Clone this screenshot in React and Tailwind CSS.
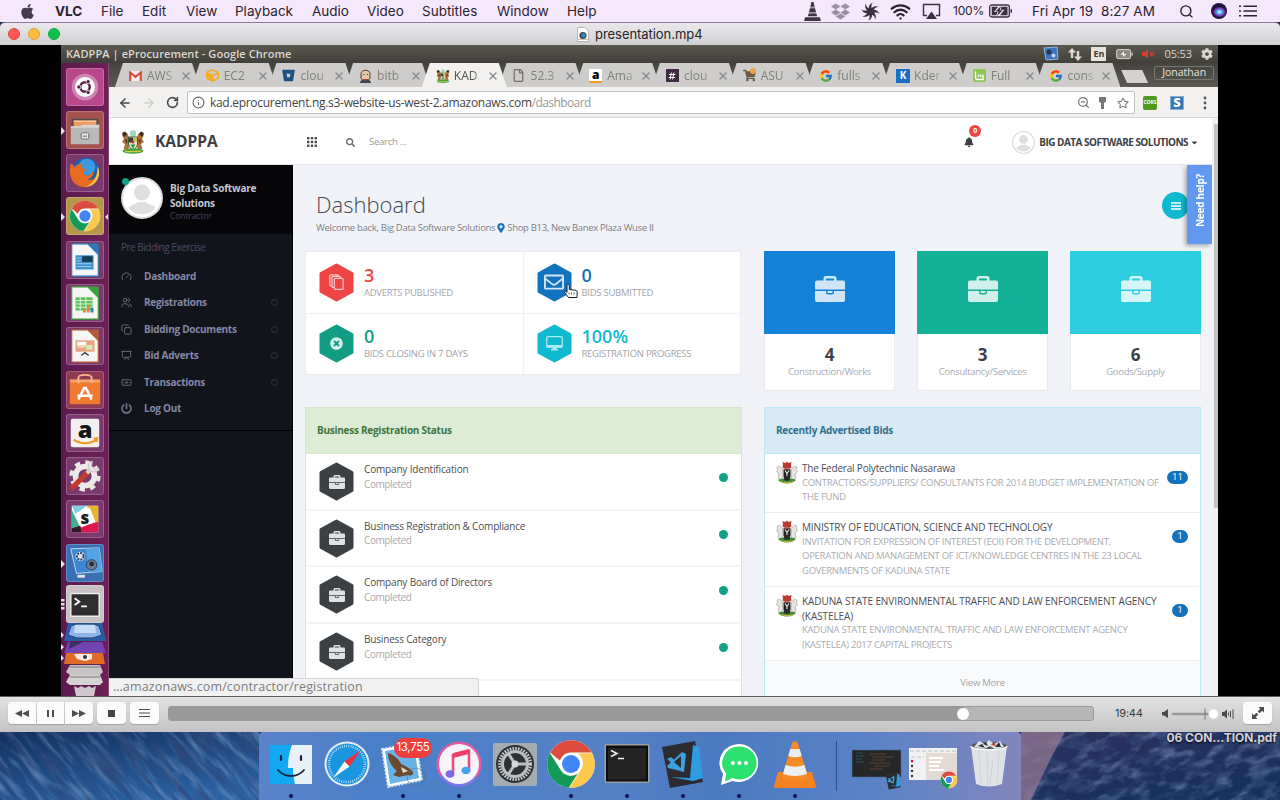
import React from "react";
import {
  FaApple, FaDropbox, FaBitbucket, FaShoppingCart, FaSearch, FaBell,
  FaMapMarkerAlt, FaRegFile, FaRegStar, FaTimesCircle, FaRegEnvelope, FaPowerOff,
  FaCaretDown, FaCog, FaCube, FaHashtag,
} from "react-icons/fa";
import { FcGoogle } from "react-icons/fc";
import { Wifi, Search, Copy, Presentation, Users, Banknote, Gauge, RotateCw, ArrowLeft, ArrowRight, Info, ZoomOut, X } from "lucide-react";

const T = ({ className = "", children }) => (
  <div className={"whitespace-nowrap " + className}>{children}</div>
);

/* ---------- macOS menu bar ---------- */
const menus = [
  ["VLC", "w-[46px] font-bold"], ["File", "w-[41px]"], ["Edit", "w-[44px]"], ["View", "w-[49px]"],
  ["Playback", "w-[77px]"], ["Audio", "w-[55px]"], ["Video", "w-[55px]"],
  ["Subtitles", "w-[75px]"], ["Window", "w-[70px]"], ["Help", "w-[40px]"],
];

function MenuBar() {
  return (
    <div className="flex h-[22px] shrink-0 items-center bg-[#f5e8fb] font-['Inter',sans-serif] text-[13.5px] text-[#2b2430]">
      <FaApple className="ml-[20px] mr-[20px] h-[17px] w-[15px] text-[#453a4c]" />
      {menus.map(([m, c]) => (
        <div key={m} className={"shrink-0 " + c}>{m}</div>
      ))}
      <div className="flex-1" />
      <svg className="mr-[10px] h-[19px] w-[17px]" viewBox="0 0 16 18" fill="#3d3444">
        <path d="M7 0h2l1 4.500H6zM5.600 6h4.800l.9 3.500H4.700zM4.300 11h7.400l.7 2.500H3.600zM1 14.500h14l1 3.500H0z" />
        <path d="M6 4.500h4l.4 1.500H5.600zM4.700 9.500h6.600l.4 1.500H4.300z" opacity=".45" />
      </svg>
      <FaDropbox className="mr-[11px] h-[19px] w-[19px] text-[#9a8fa3]" />
      <svg className="mr-[10px] h-[19px] w-[19px]" viewBox="-10 -10 20 20" fill="#3a3040">
        <circle r="3.500" />
        {[0, 45, 90, 135, 180, 225, 270, 315].map((a) => (
          <path key={a} transform={"rotate(" + a + ")"} d="M-1.700-2.500C-2-5.500-1-8 2.500-9.500C.5-7 .6-5 1.700-2.500z" />
        ))}
      </svg>
      <Wifi className="mr-[11px] h-[21px] w-[21px]" strokeWidth={2.6} />
      <svg className="mr-[12px] h-[17px] w-[19px]" viewBox="0 0 19 17">
        <path d="M5 12.500H1.500V1.500h16v11H14" fill="none" stroke="#3a3040" strokeWidth="1.400" />
        <path d="M9.500 8.500l5.500 7.500H4z" fill="#3a3040" />
      </svg>
      <T className="mr-[5px] text-[12px] tracking-[-0.2px]">100%</T>
      <svg className="mr-[19px] h-[14px] w-[24px]" viewBox="0 0 24 14">
        <rect x=".7" y="1" width="19.600" height="12" rx="2" fill="none" stroke="#3a3040" strokeWidth="1.300" />
        <path d="M2.700 2.800h6.500L5 8h3.500l-1.200 3.200H2.700zM12.500 2.800h6v8.400h-7.500l4.500-5.500h-3.800z" fill="#3a3040" />
        <path d="M12 2L6.500 7.500h3L8 12l5.700-5.800h-3z" fill="#3a3040" />
        <rect x="21.500" y="5" width="1.500" height="4" rx=".7" fill="#3a3040" />
      </svg>
      <T className="mr-[24px] whitespace-pre tracking-[0.090px]">{"Fri Apr 19  8:27 AM"}</T>
      <Search className="mr-[17px] h-[15px] w-[15px]" strokeWidth={2.2} />
      <svg className="mr-[12px] h-[16px] w-[16px]" viewBox="0 0 16 16">
        <defs><radialGradient id="siri"><stop offset="0" stopColor="#f2fbff" /><stop offset=".4" stopColor="#3fa9f0" /><stop offset=".7" stopColor="#8a2fb0" /><stop offset="1" stopColor="#1c1340" /></radialGradient></defs>
        <circle cx="8" cy="8" r="8" fill="#1c1340" /><ellipse cx="8.500" cy="9" rx="7" ry="5.500" fill="url(#siri)" />
      </svg>
      <svg className="mr-[23px] h-[12px] w-[18px]" viewBox="0 0 18 12" fill="#2b2430">
        <path d="M0 .5h2v1.600H0zM4.500 .5H18v1.600H4.500zM0 5.200h2v1.600H0zM4.500 5.200H18v1.600H4.500zM0 9.900h2v1.600H0zM4.500 9.900H18v1.600H4.500z" />
      </svg>
    </div>
  );
}

function TitleBar() {
  return (
    <div className="flex h-[23px] shrink-0 items-center rounded-t-[5px] border-t border-[#8f7a9b] bg-linear-to-b from-[#ebe9ec] to-[#d0cfd1]">
      <div className="flex w-[577px] gap-[8px] pl-[8px]">
        <i className="h-[12px] w-[12px] rounded-full border border-[#e2453f] bg-[#fc5b57]" />
        <i className="h-[12px] w-[12px] rounded-full border border-[#dfa03a] bg-[#fdbc40]" />
        <i className="h-[12px] w-[12px] rounded-full border border-[#12ac3f] bg-[#0bc150]" />
      </div>
      <svg className="mr-[6px] h-[15px] w-[12px]" viewBox="0 0 12 15">
        <path d="M.5.5H8L11.500 4v10.500H.5z" fill="#fff" stroke="#b5b5b8" /><circle cx="6" cy="8.500" r="3.600" fill="#444" /><circle cx="6.500" cy="8.500" r="2.200" fill="#2a8bc8" /><path d="M1.500 12.500h9" stroke="#888" strokeDasharray="1 1" />
      </svg>
      <T className="font-['Inter',sans-serif] text-[13px] leading-[16px] tracking-[-0.050px] text-[#262626]">presentation.mp4</T>
    </div>
  );
}

/* ---------- Ubuntu panel ---------- */
function Panel() {
  return (
    <div className="flex h-[18px] shrink-0 items-center bg-linear-to-b from-[#5a584f] to-[#413f3a] pl-[5px] pr-[5px] text-[#dcd8cf]">
      <T className="text-[11px] font-semibold tracking-[0.080px]">KADPPA | eProcurement - Google Chrome</T>
      <div className="flex-1" />
      <svg className="mr-[9px] h-[16px] w-[16px]" viewBox="0 0 16 16">
        <path d="M1 2l13-1 1 12-12 1z" fill="#3b74bd" stroke="#8eb6e2" /><circle cx="6" cy="6" r="2.500" fill="#24344f" /><circle cx="10.500" cy="9.500" r="2" fill="#b7d5f3" />
      </svg>
      <svg className="mr-[9px] h-[13px] w-[14px]" viewBox="0 0 14 13" fill="#dfdbd2"><path d="M4 0l4 4.500H5.200V10H2.800V4.500H0zM10 13l-4-4.500h2.800V3h2.400v5.500H14z" /></svg>
      <div className="mr-[10px] flex h-[14px] w-[15px] items-center justify-center bg-[#e6e3dc] text-[9px] font-bold text-[#3d3b37]">En</div>
      <svg className="mr-[9px] h-[12px] w-[17px]" viewBox="0 0 17 12"><rect x=".6" y="1.600" width="14" height="9" rx="1.500" fill="#8e8b83" stroke="#d5d1c8" /><path d="M8 3.500L4.500 6.500H7V9l3.500-3H8z" fill="#f4f2ee" /><path d="M15.500 4.500h1.200v3.200h-1.200z" fill="#d5d1c8" /></svg>
      <svg className="mr-[9px] h-[10px] w-[13px]" viewBox="0 0 13 10"><path d="M0 3h2.500L6 .5v9L2.500 7H0z" fill="#d4402c" /><path d="M8 3l4 4M12 3L8 7" stroke="#d4402c" strokeWidth="1.300" /></svg>
      <T className="mr-[9px] text-[11px] tracking-[-0.100px]">05:53</T>
      <FaCog className="h-[12px] w-[12px]" />
    </div>
  );
}

/* ---------- Ubuntu launcher ---------- */
const chromeLogo = (
  <g>
    <circle cx="19" cy="19" r="16" fill="#fff" />
    <path d="M19 3a16 16 0 0 1 14 8.200H19a8 8 0 0 0-7.500 5.500L5 11.200A16 16 0 0 1 19 3z" fill="#db4c3f" />
    <path d="M33.300 11.800A16 16 0 0 1 18 35l7.200-11.500A8 8 0 0 0 23.500 11.800z" fill="#fcc84d" />
    <path d="M4.800 11.600A16 16 0 0 0 17.500 34.900l6-9.500a8 8 0 0 1-11.300-2.200z" fill="#129b57" />
    <circle cx="19" cy="19" r="7.500" fill="#fff" /><circle cx="19" cy="19" r="6" fill="#4285f4" />
  </g>
);

const doc = (accent, inner) => (
  <g><path d="M5 2h17l11 11v23H5z" fill="#f6f6f4" stroke={accent} strokeWidth="1.200" /><path d="M21 1.500h12.500V14z" fill={accent} />{inner}</g>
);

const launcher = [
  ["bg-[#b8478c]", <g key="a"><circle cx="19" cy="19" r="14" fill="#cf86b3" /><circle cx="19" cy="19" r="10.500" fill="#fff" /><circle cx="19" cy="19" r="5" fill="none" stroke="#5e1d4c" strokeWidth="2.600" /><g fill="#5e1d4c" stroke="#fff" strokeWidth=".8"><circle cx="12.500" cy="19" r="2.200" /><circle cx="22.300" cy="13.300" r="2.200" /><circle cx="22.300" cy="24.700" r="2.200" /></g></g>],
  ["bg-[#a5524f]", <g key="b"><path d="M5 7h28l1 10H4z" fill="#4f4b48" /><path d="M7 9h24v8H7z" fill="#ef9a5a" /><path d="M7 9h24v1.500H7z" fill="#f8c8a2" /><path d="M4 15h10l2-1.500h18V34H4z" fill="#b9b9b7" /><path d="M4 15h10l2-1.500h18v3H4z" fill="#d5d5d3" /><rect x="15" y="22" width="8" height="6.500" rx="1" fill="#e8e8e8" stroke="#666" /><path d="M17 25.500h4" stroke="#555" /></g>],
  ["bg-[#7b3a6d]", <g key="c"><circle cx="19.500" cy="18" r="15" fill="#1e5fae" /><circle cx="21" cy="13" r="9" fill="#3d9ade" /><path d="M4 9c2 1 3 2 4 4 2-3 5-4 9-3-2 1-2 3-1 4l4 1-3 3c2 6 9 4 10 0 2 2-1 7-5 8 6 2 12-4 10-14 5 9 0 21-13 22C8 34 0 24 4 9z" fill="#e66a20" /><path d="M32 12c5 9 0 21-13 22 8-3 14-11 13-22z" fill="#f8c23c" /></g>],
  ["bg-[#b4974a]", <g key="d">{chromeLogo}</g>],
  ["bg-[#7b3a6d]", doc("#2f77b5", <g><rect x="9" y="14" width="19" height="15" fill="#3c8fca" /><rect x="16" y="15" width="11" height="6" fill="#173d57" /><path d="M10 17h5M10 20h5M10 23h16M10 26h16" stroke="#a9d3ee" /></g>)],
  ["bg-[#7b3a6d]", doc("#3aa23a", <g><rect x="9" y="13" width="18" height="14" fill="#5dc053" /><path d="M9 16.500h18M9 20h18M9 23.500h18M14 13v14M20 13v14" stroke="#e6f5e4" /><path d="M17 29v-4h3v4M21 29v-7h3v7" fill="#e5823b" /><path d="M25 29v-5h3v5" fill="#2e83c9" /></g>)],
  ["bg-[#7b3a6d]", doc("#b6593a", <g><rect x="9" y="13" width="20" height="12" fill="#e9a07c" /><path d="M11 15h9v3h-9zM11 20h8" fill="#fff" stroke="#fff" /><rect x="20" y="18" width="7" height="5" fill="#d6e9b9" /><path d="M15 29l4-3 4 3" fill="none" stroke="#444" strokeWidth="1.500" /></g>)],
  ["bg-[#8d3a55]", <g key="h"><path d="M3 8h32v26H3z" fill="#f07a32" /><path d="M3 8h32v3H3z" fill="#f5a36c" /><path d="M12 12V6c0-4 14-4 14 0v6" fill="none" stroke="#f9b48a" strokeWidth="2" /><path d="M12 29l6-12h2l6 12M11 25h16" fill="none" stroke="#fff" strokeWidth="2.600" /></g>],
  ["bg-[#7b3a6d]", <g key="i"><rect x="4" y="4" width="30" height="30" rx="2" fill="#f2f1ef" /><text x="19" y="24" textAnchor="middle" fontFamily="Open Sans, sans-serif" fontWeight="800" fontSize="25" fill="#161616">a</text><path d="M7 26c7 5 17 5 24 0M28 25l4-.5-1 4" fill="none" stroke="#f49a1f" strokeWidth="2" /></g>],
  ["bg-[#7b3a6d]", <g key="j"><circle cx="19" cy="19" r="10" fill="none" stroke="#ece9e6" strokeWidth="6" /><circle cx="19" cy="19" r="14.500" fill="none" stroke="#ece9e6" strokeWidth="4" strokeDasharray="5.700 5.680" /><path d="M6 31l15-15" stroke="#c53c2e" strokeWidth="5.500" strokeLinecap="round" /><path d="M21 16l5-5" stroke="#d6d4d1" strokeWidth="4" /><path d="M27 3a6 6 0 1 0 7 8l-5 1-3-3z" fill="#e9e7e5" stroke="#a8a5a3" strokeWidth=".6" /></g>],
  ["bg-[#7b3a6d]", <g key="k"><path d="M5 5h28v28H5z" fill="#fff" /><path d="M5 5h16L9 14z" fill="#7fcfe0" /><path d="M21 5h12v17l-5 1z" fill="#ecb22e" /><path d="M5 9l9 19-9 3z" fill="#3eb08a" /><path d="M5 33v-4l28-7v11z" fill="#e0174f" /><path d="M5 29l9-3 1 7H5z" fill="#2b1a2e" /><path d="M9 13l15-6 6 15-15 6z" fill="#fff" /><text x="19" y="24.500" textAnchor="middle" fontFamily="Open Sans, sans-serif" fontWeight="800" fontSize="18" fill="#1c1c1c">s</text></g>],
  ["bg-[#3a6fb4]", <g key="l"><path d="M4 4l30-1 3 25-27 2z" fill="#3c87cf" stroke="#c9dff3" /><path d="M20 4l14-1 3 25-14 1z" fill="#54a4e4" /><circle cx="14" cy="12" r="5" fill="#d3e4f5" /><circle cx="14" cy="12" r="3.500" fill="none" stroke="#26374f" strokeWidth="2" strokeDasharray="2 1.200" /><circle cx="26" cy="21" r="5.500" fill="#6d7d8f" stroke="#2b3b52" /><circle cx="26" cy="20" r="2.500" fill="#26303e" /><path d="M11 33h8" stroke="#e5e5e5" strokeWidth="3" /></g>],
  ["bg-[#c9c2c4] -mt-[2.500px]", <g key="m"><rect x="4" y="8" width="30" height="24" rx="1" fill="#2f2f2f" stroke="#efefef" strokeWidth="1.500" /><path d="M8 13l5 3.500-5 3.500M15 21.500h6" fill="none" stroke="#fff" strokeWidth="1.800" /></g>],
];

function Launcher() {
  return (
    <div className="flex w-[48px] shrink-0 flex-col items-center gap-[5.300px] overflow-hidden border-r border-[#8a4a78] bg-linear-to-r from-[#5b1a4f] to-[#6c2057] pt-[4.500px]">
      {launcher.map(([bg, art], i) => (
        <div key={i} className={"relative h-[38px] w-[38px] shrink-0 rounded-[3px] border border-white/20 " + bg}>
          <svg className="h-[36px] w-[36px]" viewBox="0 0 38 38">{art}</svg>
          {[1, 3, 11].includes(i) && (
            <svg className="absolute -left-[6px] top-[15px] h-[8px] w-[5px]" viewBox="0 0 5 8" fill="#e9dfe6"><path d="M0 0l4 4-4 4z" /></svg>
          )}
          {i === 12 && <svg className="absolute -left-[6px] top-[13px] h-[11px] w-[5px]" viewBox="0 0 5 11" fill="#e9dfe6"><path d="M0 0h3.500v2.500H0zM0 4h3.500v2.500H0zM0 8h3.500v2.500H0z" /></svg>}
          {i === 3 && <svg className="absolute -right-[6px] top-[15px] h-[8px] w-[5px]" viewBox="0 0 5 8" fill="#e9dfe6"><path d="M5 0L1 4l4 4z" /></svg>}
        </div>
      ))}
      <svg className="-mt-[4.500px] h-[73px] w-[47px] shrink-0" viewBox="0 0 47 73">
        <path d="M7 0h34l4 18H3z" fill="#2c5ea8" /><path d="M10 3l5-2h18l5 2 3 9-9 3H16l-9-3z" fill="#8fb3e6" stroke="#1d3d73" /><path d="M14 2h20l1 8H13z" fill="#c9dcf7" />
        <path d="M7 19h34l4 11H3z" fill="#7443b3" /><path d="M8 26l14-7H9z" fill="#343061" />
        <path d="M5 30h37l2 11H3z" fill="#e06a2a" /><path d="M13 31h18v5l-7 2-8-2z" fill="#f2ece5" /><circle cx="24" cy="34" r="2" fill="#333" />
        <path d="M9 42h30l3 7-3 3H9l-4-3z" fill="#c6c3c4" /><path d="M9 44h30" stroke="#7b7779" />
        <path d="M9 52h30l3 7-3 3H9l-4-3z" fill="#d6d3d4" /><path d="M9 54h30" stroke="#7b7779" />
        <path d="M13 63l4 2 3-2 4 2 4-2 3 2 4-2-2 10H15z" fill="#cfc6cc" />
        <path d="M0 9l3 3-3 3zM0 21l3 3-3 3zM0 32l3 3-3 3z" fill="#e9dfe6" />
      </svg>
    </div>
  );
}

/* ---------- Coats of arms ---------- */
function Crest({ className }) {
  return (
    <svg className={className} viewBox="0 0 24 24">
      <circle cx="12" cy="3.500" r="3.200" fill="#9bd8bd" />
      <path d="M1 5l3-3 3 2 1.500 6-1 10-5-1 1.500-5-3-2 2-3z" fill="#a9743a" /><path d="M23 5l-3-3-3 2-1.500 6 1 10 5-1-1.500-5 3-2-2-3z" fill="#a9743a" />
      <path d="M1 3l3-1.500L6 4 3 7zM23 3l-3-1.500L18 4l3 3z" fill="#3a2b20" /><path d="M3.500 9l3 1-1 4zM20.500 9l-3 1 1 4z" fill="#5b3a1e" />
      <path d="M7.500 7h9v7c0 3-3 5-4.500 6-1.500-1-4.500-3-4.500-6z" fill="#efe6c0" stroke="#3c5a3a" /><path d="M8 7.500h4v5H8z" fill="#3a3a3a" /><path d="M12 7.500h4v4h-4z" fill="#c9c05a" /><path d="M9.500 14.500h5l-2.500 4z" fill="#2f8a4e" /><circle cx="12" cy="12" r="1.500" fill="#c0392b" />
      <ellipse cx="12" cy="21" rx="10.500" ry="2.800" fill="#3fa044" /><path d="M4 21.500h16" stroke="#e3c53a" strokeWidth="1.400" />
    </svg>
  );
}
function Arms() {
  return (
    <svg className="h-[23px] w-[22px] shrink-0" viewBox="0 0 22 23">
      <path d="M6.500 1l3 1L11 .5 12.500 2l3-1-.5 3 .5 2.500-2.500 1H9L6.500 6.500 7 4z" fill="#b8392d" /><path d="M7.500 7.500h7V9h-7z" fill="#7c4a42" />
      <path d="M1 6c2-1.500 5 0 5.500 3L7 16l-2 3-3-2 1-4-2.500-2 1-2.500zM21 6c-2-1.500-5 0-5.500 3L15 16l2 3 3-2-1-4 2.500-2-1-2.500z" fill="#e6e4e0" stroke="#aaa7a1" strokeWidth=".7" />
      <path d="M7.500 9h7v6.500c0 1.500-2 3-3.500 4-1.500-1-3.500-2.500-3.500-4z" fill="#222224" /><path d="M9 9.500l2 3 2-3M11 12.500V18" fill="none" stroke="#eee" strokeWidth="1.100" />
      <path d="M2 19c3-2.500 15-2.500 18 0-2 2.500-5 3.500-9 3.500S4 21.500 2 19z" fill="#3f8b3c" /><path d="M8.500 15l5 0 .5 4-3 1-3-1z" fill="#2a2a2a" /><path d="M4.500 20.500c4 1.700 9 1.700 13 0" stroke="#d9b93a" fill="none" />
    </svg>
  );
}

/* ---------- Chrome ---------- */
const G = <FcGoogle className="h-[14px] w-[14px]" />;
const tabs = [
  ["AWS", <svg key="g" viewBox="0 0 13 10" className="h-[10px] w-[13px]"><path d="M0 0h13v10H0z" fill="#f1efee" /><path d="M1.200 10V1.500l5.300 4.300 5.300-4.300V10" fill="none" stroke="#d54b3d" strokeWidth="2.200" /></svg>],
  ["EC2", <FaCube key="c" className="h-[13px] w-[13px] text-[#f4ab28]" />],
  ["clou", <FaBitbucket key="b" className="h-[13px] w-[13px] text-[#205081]" />],
  ["bitb", <svg key="j" viewBox="0 0 13 14" className="h-[14px] w-[13px]"><path d="M2 5C2 0 11 0 11 5v4c0 3-9 3-9 0z" fill="#e8c7a6" stroke="#493a33" /><path d="M1 14c0-5 11-5 11 0z" fill="#3e4452" /><path d="M5 10l1.500 3L8 10z" fill="#c0392b" /><path d="M4.500 5.500h1M8 5.500h1" stroke="#333" /></svg>],
  ["KAD", <Crest key="k" className="h-[14px] w-[14px]" />],
  ["52.3", <FaRegFile key="f" className="h-[13px] w-[11px] text-[#6f6e6c]" />],
  ["Ama", <div key="a" className="flex h-[14px] w-[13px] items-center justify-center rounded-[1px] border-b-2 border-[#f49a1f] bg-white text-[12px] leading-[10px] font-extrabold text-black">a</div>],
  ["clou", <div key="s" className="flex h-[13px] w-[13px] items-center justify-center bg-[#3f2b41]"><FaHashtag className="h-[8px] w-[8px] text-white" /></div>],
  ["ASU", <div key="m" className="relative"><FaShoppingCart className="h-[13px] w-[13px] text-[#6b5a48]" /><i className="absolute -top-[1px] right-0 h-[6px] w-[6px] rounded-full bg-[#f2a04a]" /></div>],
  ["fulls", G],
  ["Kder", <div key="kd" className="flex h-[14px] w-[14px] items-center justify-center bg-[#1a6fc4] text-[10px] font-bold text-white">K</div>],
  ["Full", <svg key="mi" viewBox="0 0 13 13" className="h-[13px] w-[13px]"><rect width="13" height="13" rx="2" fill="#8bc751" /><path d="M2.500 2.500v6c0 1.500 1 2 2 2h5.500V5.500M5.500 8V5.500M7.700 8V5.500" fill="none" stroke="#fff" strokeWidth="1.400" /></svg>],
  ["cons", G],
];

function TabStrip() {
  return (
    <div className="flex h-[24px] shrink-0 bg-linear-to-b from-[#45433e] to-[#5b5952] pl-[6px]">
      {tabs.map(([t, icon], i) => (
        <div key={i} className={"-mr-[8.300px] flex h-[24px] w-[85px] shrink-0 items-center pl-[14px] pt-[1px] [clip-path:polygon(8px_0,77px_0,85px_100%,0_100%)] " + (i === 4 ? "relative z-10 bg-[#f2f1f0] text-[#55534f]" : "bg-[#cecdcb] text-[#7f7e7b]")}>
          <span className="flex w-[18px] shrink-0 items-center">{icon}</span>
          <span className="w-[28px] overflow-hidden text-[12px] whitespace-nowrap [mask-image:linear-gradient(90deg,#000_65%,rgba(0,0,0,0.25))]">{t}</span>
          <X className="ml-[5px] h-[12px] w-[12px] shrink-0 text-[#888]" strokeWidth={2.600} />
        </div>
      ))}
      <div className="ml-[9px] mt-[7px] h-[13px] w-[27px] bg-[#d3d2d0] [clip-path:polygon(0_0,21px_0,27px_100%,6px_100%)]" />
      <div className="ml-[6px] mt-[3px] flex h-[14px] w-[60px] items-center justify-center rounded-[2px] border border-[#7b796f] text-[10.500px] text-[#e8e5de]">Jonathan</div>
    </div>
  );
}

function Toolbar() {
  return (
    <div className="flex h-[31px] shrink-0 items-center border-b border-[#d6d5d3] bg-[#f2f1f0] pl-[9px] pt-[1px]">
      <ArrowLeft className="h-[14px] w-[14px] text-[#4a4a4a]" strokeWidth={2.600} />
      <ArrowRight className="ml-[10px] h-[14px] w-[14px] text-[#d2d1cf]" strokeWidth={2.600} />
      <RotateCw className="ml-[10px] h-[13px] w-[13px] text-[#4a4a4a]" strokeWidth={3} />
      <div className="ml-[8px] flex h-[23px] w-[948px] items-center rounded-[2px] border border-[#c2c1bf] bg-white">
        <Info className="ml-[4px] h-[13px] w-[13px] text-[#666]" strokeWidth={2} />
        <T className="ml-[5px] text-[12px] leading-none tracking-[-0.300px] text-[#444]">kad.eprocurement.ng.s3-website-us-west-2.amazonaws.com</T>
        <T className="text-[12px] leading-none tracking-[-0.600px] text-[#9a9a9a]">/dashboard</T>
        <div className="flex-1" />
        <ZoomOut className="mr-[9px] h-[13px] w-[13px] text-[#777]" strokeWidth={2.300} />
        <svg className="mr-[11px] h-[12px] w-[7px]" viewBox="0 0 7 12" fill="#777"><path d="M0 0h7v4.500L5 6v6H2V6L0 4.500z" /></svg>
        <FaRegStar className="mr-[5px] h-[12px] w-[12px] text-[#777]" />
      </div>
      <div className="ml-[8px] flex h-[14px] w-[14px] items-center justify-center rounded-[2px] bg-[#4f9a1d] text-[5px] font-bold text-white">CORS</div>
      <div className="ml-[13px] flex h-[14px] w-[14px] items-center justify-center border border-[#89b0d4] bg-[#2f77b8] text-[13px] leading-none font-extrabold text-white">S</div>
      <svg className="ml-[19px] h-[14px] w-[4px]" viewBox="0 0 4 14" fill="#555"><circle cx="2" cy="2" r="1.400" /><circle cx="2" cy="7" r="1.400" /><circle cx="2" cy="12" r="1.400" /></svg>
    </div>
  );
}

/* ---------- KADPPA app ---------- */
function Avatar({ className }) {
  return (
    <svg className={className} viewBox="0 0 42 42">
      <circle cx="21" cy="21" r="20" fill="#fff" stroke="#dcdcdf" strokeWidth="2" />
      <circle cx="21" cy="15.500" r="8" fill="#dfdfe2" /><path d="M7.500 31c4-5 8-3 9-6h9c1 3 5 1 9 6A17.500 17.500 0 0 1 7.500 31z" fill="#dfdfe2" />
    </svg>
  );
}

function AppHeader() {
  return (
    <div className="flex h-[47px] shrink-0 items-center border-b border-[#e3e5ea] bg-white pl-[12px] pt-[2px]">
      <Crest className="h-[24px] w-[24px]" />
      <T className="ml-[10px] w-[152px] text-[15.500px] font-bold text-[#3c4045]">KADPPA</T>
      <svg className="h-[10px] w-[10px]" viewBox="0 0 10 10" fill="#4a4d52">{[0, 3.800, 7.600].map((y) => [0, 3.800, 7.600].map((x) => <rect key={x + "-" + y} x={x} y={y} width="2.400" height="2.400" />))}</svg>
      <FaSearch className="ml-[29px] h-[9px] w-[9px] text-[#666]" />
      <T className="ml-[14px] text-[9.500px] tracking-[-0.250px] text-[#999]">Search ...</T>
      <div className="flex-1" />
      <div className="relative mr-[38px] w-[10px]">
        <FaBell className="h-[10px] w-[10px] text-[#3c4045]" />
        <span className="absolute -top-[12px] left-[5px] flex h-[12px] w-[12px] items-center justify-center rounded-full bg-[#ef4444] text-[7px] font-bold text-white">0</span>
      </div>
      <Avatar className="h-[23px] w-[23px]" />
      <T className="ml-[4px] text-[10px] font-bold tracking-[-0.530px] text-[#3c4045]">BIG DATA SOFTWARE SOLUTIONS</T>
      <FaCaretDown className="ml-[3px] mr-[14px] h-[9px] w-[7px] text-[#3c4045]" />
    </div>
  );
}

const nav = [
  ["Dashboard", Gauge, false], ["Registrations", Users, true], ["Bidding Documents", Copy, true],
  ["Bid Adverts", Presentation, true], ["Transactions", Banknote, true], ["Log Out", FaPowerOff, false],
];

function Sidebar() {
  return (
    <div className="w-[184px] shrink-0 border-r border-black bg-[#12141b]">
      <div className="flex h-[69px] bg-[#060609] pl-[12px] pt-[12px]">
        <div className="relative">
          <Avatar className="h-[42px] w-[42px]" />
          <i className="absolute left-[1px] top-[1px] h-[7px] w-[7px] rounded-full bg-[#12a184]" />
        </div>
        <div className="ml-[7px] pt-[4px]">
          <T className="text-[10px] leading-[14.500px] font-bold tracking-[-0.180px] text-[#c4c6d0]">Big Data Software</T>
          <T className="text-[10px] leading-[14.500px] font-bold tracking-[-0.180px] text-[#c4c6d0]">Solutions</T>
          <T className="text-[8.500px] leading-[12px] tracking-[-0.100px] text-[#42455a]">Contractor</T>
        </div>
      </div>
      <div className="h-[197px] border-b border-black pt-[7px]">
        <T className="pl-[12px] text-[10px] leading-[13px] tracking-[-0.500px] text-[#4a4d63]">Pre Bidding Exercise</T>
        <div className="mt-[9px]">
          {nav.map(([t, Icon, dot]) => (
            <div key={t} className="flex h-[26.500px] items-center pl-[12px] pr-[14px]">
              <Icon className="h-[11px] w-[11px] text-[#6c6f86]" />
              <T className="ml-[12px] flex-1 text-[10px] font-bold tracking-[-0.270px] text-[#8587a6]">{t}</T>
              {dot && <i className="h-[7px] w-[7px] rounded-full border border-[#32354a]" />}
            </div>
          ))}
        </div>
      </div>
    </div>
  );
}

function Hex({ fill, children }) {
  return (
    <div className="grid h-[39px] w-[35px] shrink-0 place-items-center">
      <svg className="col-start-1 row-start-1 h-[39px] w-[35px]" viewBox="0 0 35 39"><path d="M17.500 2L33 10.500v18L17.500 37 2 28.500v-18z" fill={fill} stroke={fill} strokeWidth="3" strokeLinejoin="round" /></svg>
      <div className="z-10 col-start-1 row-start-1">{children}</div>
    </div>
  );
}

const stats = [
  ["3", "ADVERTS PUBLISHED", "#ef4444", "text-[#ef4444]", <svg key="a" className="h-[16px] w-[15px]" viewBox="0 0 15 16" fill="#ef4444" stroke="#fbc9c9" strokeWidth="1.200"><rect x=".8" y=".8" width="8.500" height="11" rx="1" /><rect x="3" y="2.400" width="8.500" height="11" rx="1" /><rect x="5.300" y="4.300" width="8.800" height="11" rx="1" /></svg>],
  ["0", "BIDS SUBMITTED", "#1272bd", "text-[#1272bd]", <FaRegEnvelope key="b" className="h-[20px] w-[20px] text-[#d5e6f5]" />],
  ["0", "BIDS CLOSING IN 7 DAYS", "#129e85", "text-[#129e85]", <FaTimesCircle key="c" className="h-[13px] w-[13px] text-[#d5efea]" />],
  ["100%", "REGISTRATION PROGRESS", "#0fb9d0", "text-[#0fb9d0]", <svg key="d" className="h-[15px] w-[17px]" viewBox="0 0 17 15"><rect x=".7" y=".7" width="15.600" height="10.500" rx="1" fill="none" stroke="#a9ebf3" strokeWidth="1.300" /><path d="M1 9h15v2.500H1zM6.500 11.500h4V13H12v1.500H5V13h1.500z" fill="#a9ebf3" /></svg>],
];

function Briefcase({ className }) {
  return (
    <svg className={className} viewBox="0 0 30 26" fill="currentColor">
      <path d="M8.500 4.500V2.500A2.500 2.500 0 0 1 11 0h8a2.500 2.500 0 0 1 2.500 2.500v2h-2.500v-2h-8v2zM2 4.500h26a2 2 0 0 1 2 2v7H0v-7a2 2 0 0 1 2-2zM0 15h11v1.500a2 2 0 0 0 2 2h4a2 2 0 0 0 2-2V15h11v9a2 2 0 0 1-2 2H2a2 2 0 0 1-2-2zM12.500 15h5v2h-5z" />
    </svg>
  );
}

const cats = [["4", "Construction/Works", "bg-[#1482d6]"], ["3", "Consultancy/Services", "bg-[#14b097]"], ["6", "Goods/Supply", "bg-[#2fcde0]"]];
const regs = ["Company Identification", "Business Registration & Compliance", "Company Board of Directors", "Business Category"];
const bids = [
  { h: "h-[59px]", track: "tracking-[-0.190px]", title: ["The Federal Polytechnic Nasarawa"], body: ["CONTRACTORS/SUPPLIERS/ CONSULTANTS FOR 2014 BUDGET IMPLEMENTATION OF", "THE FUND"], n: "11" },
  { h: "h-[74px]", track: "tracking-[-0.130px]", title: ["MINISTRY OF EDUCATION, SCIENCE AND TECHNOLOGY"], body: ["INVITATION FOR EXPRESSION OF INTEREST (EOI) FOR THE DEVELOPMENT,", "OPERATION AND MANAGEMENT OF ICT/KNOWLEDGE CENTRES IN THE 23 LOCAL", "GOVERNMENTS OF KADUNA STATE"], n: "1" },
  { h: "h-[74px]", track: "tracking-[-0.080px]", title: ["KADUNA STATE ENVIRONMENTAL TRAFFIC AND LAW ENFORCEMENT AGENCY", "(KASTELEA)"], body: ["KADUNA STATE ENVIRONMENTAL TRAFFIC AND LAW ENFORCEMENT AGENCY", "(KASTELEA) 2017 CAPITAL PROJECTS"], n: "1" },
];

function Content() {
  return (
    <div className="relative flex-1 overflow-hidden bg-[#f1f3f8] pl-[12px]">
      <div className="h-[86px] pl-[11px] pt-[25px]">
        <T className="h-[30px] text-[22px] leading-[28px] font-light text-[#45484d]">Dashboard</T>
        <div className="flex items-center text-[9.500px] leading-[15px] text-[#7b7e85]">
          <T className="tracking-[-0.290px]">Welcome back, Big Data Software Solutions</T>
          <FaMapMarkerAlt className="ml-[2px] mr-[2px] h-[10px] w-[8px] text-[#1272bd]" />
          <T className="tracking-[-0.330px]">Shop B13, New Banex Plaza Wuse II</T>
        </div>
      </div>
      <div className="flex gap-[22px]">
        <div className="w-[437px]">
          <div className="grid h-[124px] w-[436px] grid-cols-2 grid-rows-2 gap-px border border-[#eaecf0] bg-[#eef0f3]">
            {stats.map(([n, l, c, tc, ic]) => (
              <div key={l} className="flex items-center bg-white pl-[13px]">
                <Hex fill={c}>{ic}</Hex>
                <div className="ml-[10px]">
                  <div className={"h-[20px] text-[18px] leading-[20px] font-semibold " + tc}>{n}</div>
                  <T className="h-[15px] text-[9.500px] leading-[15px] tracking-[-0.270px] text-[#a3a6aa]">{l}</T>
                </div>
              </div>
            ))}
          </div>
          <div className="mt-[32px] border border-[#d6e9c6] bg-white">
            <div className="flex h-[46px] items-center border-b border-[#d6e9c6] bg-[#dcecd5] pl-[11px]"><T className="text-[10px] font-bold tracking-[-0.260px] text-[#3c763d]">Business Registration Status</T></div>
            {regs.map((t) => (
              <div key={t} className="mx-px flex h-[56.700px] border-b-2 border-[#f3f4f6] pl-[12px] pt-[8px]">
                <Hex fill="#3b4045"><Briefcase className="h-[14px] w-[16px] text-[#dfe1e3]" /></Hex>
                <div className="ml-[10px] flex-1 text-[10px] leading-[14.500px]">
                  <T className="tracking-[-0.170px] text-[#4b4e53]">{t}</T>
                  <T className="tracking-[-0.400px] text-[#a9acb0]">Completed</T>
                </div>
                <i className="mr-[12px] mt-[11px] h-[9px] w-[9px] rounded-full bg-[#12a184]" />
              </div>
            ))}
            <div className="h-[40px] pl-[56px] pt-[9px] text-[10px] tracking-[-0.170px] text-[#4b4e53]">Company Work Personnel</div>
          </div>
        </div>
        <div className="w-[437px]">
          <div className="flex h-[140px] justify-between">
            {cats.map(([n, l, bg]) => (
              <div key={l} className="flex w-[131px] flex-col border border-[#e8eaee] bg-white text-center">
                <div className={"-mx-px -mt-px flex h-[83px] items-center justify-center pb-[7px] text-white/80 " + bg}><Briefcase className="h-[26px] w-[30px]" /></div>
                <div className="mt-[10px] text-[17px] leading-[21px] font-bold text-[#3b4045]">{n}</div>
                <T className="text-[9.500px] leading-[14px] tracking-[-0.290px] text-[#a9acb0]">{l}</T>
              </div>
            ))}
          </div>
          <div className="mt-[16px] border border-[#bce8f1] bg-white">
            <div className="flex h-[46px] items-center border-b border-[#bce8f1] bg-[#d8eaf5] pl-[11px]"><T className="text-[10px] font-bold tracking-[-0.270px] text-[#31708f]">Recently Advertised Bids</T></div>
            {bids.map((b) => (
              <div key={b.title[0]} className={"flex border-b border-[#eceef0] pl-[11px] pr-[12px] pt-[7px] " + b.h}>
                <Arms />
                <div className="ml-[4px] flex-1 text-[10px] leading-[14.500px]">
                  {b.title.map((t) => <T key={t} className={"text-[#4b4e53] " + b.track}>{t}</T>)}
                  {b.body.map((t) => <T key={t} className="text-[9.500px] tracking-[-0.260px] text-[#a9acb0]">{t}</T>)}
                </div>
                <span className={"mt-[10px] flex h-[13px] shrink-0 items-center justify-center rounded-full bg-[#1272bd] text-[9.500px] text-white " + (b.n === "11" ? "w-[21px]" : "w-[16px]")}>{b.n}</span>
              </div>
            ))}
            <div className="flex h-[60px] justify-center bg-[#f8fafc] pt-[15px] text-[9.500px] tracking-[-0.250px] text-[#a3a6aa]">View More</div>
          </div>
        </div>
      </div>
      <div className="absolute right-[23px] top-[27px] flex h-[27px] w-[27px] items-center justify-center rounded-full bg-[#0fb9d0]">
        <svg className="h-[8px] w-[10px]" viewBox="0 0 10 8" stroke="#fff" strokeWidth="1.500"><path d="M0 1h10M0 4h10M0 7h10" /></svg>
      </div>
      <div className="absolute right-0 top-0 flex h-[79px] w-[25px] items-center justify-center rounded-bl-[2px] bg-[#6299f0] pb-[7px] pl-[2px] shadow-[-2px_2px_4px_rgba(0,0,0,0.3)]">
        <div className="rotate-180 text-[10px] font-bold tracking-[-0.250px] text-white [writing-mode:vertical-rl]">Need help?</div>
      </div>
      <svg className="absolute left-[271px] top-[118px] h-[16px] w-[14px]" viewBox="0 0 14 16">
        <path d="M4 1.500c1 0 1.300.5 1.300 1.500v3.500l6.500.8c1 .2 1.500.8 1.400 1.700L13 14.500H4.500L.8 9.500c-.4-1 .8-1.500 1.500-.8l.7.7V3c0-1 .2-1.500 1-1.500z" fill="#fff" stroke="#1b1b1b" /><path d="M5 9.500v2M7.500 9.500v2M10 9.500v2" stroke="#555" />
      </svg>
    </div>
  );
}

function Video() {
  return (
    <div className="flex h-[651px] shrink-0 bg-black pl-[61px] pr-[62px] font-['Open_Sans','Noto_Sans',sans-serif]">
      <div className="flex flex-1 flex-col overflow-hidden">
        <Panel />
        <div className="flex min-h-0 flex-1">
          <Launcher />
          <div className="relative flex min-w-0 flex-1 flex-col">
            <TabStrip />
            <Toolbar />
            <div className="flex min-h-0 flex-1">
              <div className="flex min-w-0 flex-1 flex-col">
                <AppHeader />
                <div className="flex min-h-0 flex-1"><Sidebar /><Content /></div>
              </div>
              <div className="w-[6px] shrink-0 bg-[#f1f1f1] pt-[6px]"><div className="ml-[2px] h-[384px] bg-[#bfc1c3]" /></div>
            </div>
            <div className="absolute bottom-0 left-0 flex h-[18px] w-[370px] items-center rounded-tr-[3px] border-t border-r border-[#d6d6d6] bg-[#f1f1f1] pl-[4px] text-[12.500px] text-[#7c7c7c]">
              <T className="tracking-[0.140px]">…amazonaws.com/contractor/registration</T>
            </div>
          </div>
        </div>
      </div>
    </div>
  );
}

/* ---------- VLC controls ---------- */
function Controls() {
  const btn = "flex h-[22px] items-center justify-center bg-[#fbfbfb] shadow-[0_1px_1px_rgba(0,0,0,0.2)] ";
  return (
    <div className="flex h-[36px] shrink-0 items-start border-t border-[#5d5d5d] bg-linear-to-b from-[#e2e2e2] to-[#c4c4c4] px-[8px] pt-[5px] font-['Inter',sans-serif]">
      <div className={btn + "w-[28px] rounded-l-[4px]"}><svg className="h-[7px] w-[14px]" viewBox="0 0 14 8" preserveAspectRatio="none" fill="#4c4c4c"><path d="M7 0v8L0 4zM14 0v8L7 4z" /></svg></div>
      <div className={btn + "ml-px w-[27px]"}><svg className="h-[7px] w-[7px]" viewBox="0 0 7 7" fill="#4c4c4c"><path d="M0 0h2v7H0zM5 0h2v7H5z" /></svg></div>
      <div className={btn + "ml-px w-[28px] rounded-r-[4px]"}><svg className="h-[7px] w-[14px]" viewBox="0 0 14 8" preserveAspectRatio="none" fill="#4c4c4c"><path d="M0 0v8l7-4zM7 0v8l7-4z" /></svg></div>
      <div className={btn + "ml-[4px] w-[29px] rounded-[4px]"}><i className="h-[7px] w-[7px] bg-[#444]" /></div>
      <div className={btn + "ml-[4px] w-[29px] rounded-[4px]"}><svg className="h-[8px] w-[11px]" viewBox="0 0 11 8" stroke="#4c4c4c"><path d="M0 .5h11M0 4h11M0 7.500h11" /></svg></div>
      <div className="relative ml-[9px] mt-[4px] h-[15px] w-[926px] rounded-[3px] border border-[#999] bg-[#b7b7b7]">
        <div className="h-full w-[795px] bg-[#999]" />
        <i className="absolute left-[788px] top-[1px] h-[12px] w-[12px] rounded-full bg-white" />
      </div>
      <div className="ml-[21px] mt-[4px] w-[47px] text-[11px] leading-[15px] tracking-[-0.200px] text-[#3c3c3c]">19:44</div>
      <svg className="mt-[6px] h-[12px] w-[73px]" viewBox="0 0 73 12">
        <path d="M0 4h2l4-3v9L2 7.500H0z" fill="#4c4c4c" /><path d="M11 6h42" stroke="#9a9a9a" strokeWidth="2.500" strokeLinecap="round" /><path d="M43 .5v11" stroke="#777" />
        <circle cx="51.500" cy="6" r="5" fill="#fff" stroke="#ccc" strokeWidth=".5" /><path d="M60 4h2l3-2.500v9L62 8h-2z" fill="#4c4c4c" /><path d="M66.500 4.500v3M68.500 3v6M71 1.200v9.600" stroke="#4c4c4c" />
      </svg>
      <div className={btn + "ml-[8px] w-[29px] rounded-[4px]"}><svg className="h-[12px] w-[12px]" viewBox="0 0 12 12" fill="#4c4c4c"><path d="M6.500 0H12v5.500L10.200 3.700 7.500 6.300 5.700 4.500l2.600-2.700zM5.500 12H0V6.500l1.800 1.800 2.700-2.600 1.800 1.800-2.600 2.700z" /></svg></div>
    </div>
  );
}

/* ---------- Desktop and dock ---------- */
function Rocks({ id, from, to, freq, hill }) {
  return (
    <svg className="h-[68px] w-full" viewBox="0 0 259 68" preserveAspectRatio="none">
      <defs>
        <linearGradient id={id + "g"} x1="0" y1="0" x2=".6" y2="1"><stop offset="0" stopColor={from} /><stop offset="1" stopColor={to} /></linearGradient>
        <filter id={id + "n"} x="0" y="0" width="1" height="1"><feTurbulence type="fractalNoise" baseFrequency={freq} numOctaves="4" seed="7" /><feColorMatrix values="0 0 0 0 .38  0 0 0 0 .55  0 0 0 0 .8  2.600 0 0 0 -1.200" /></filter>
        <filter id={id + "d"} x="0" y="0" width="1" height="1"><feTurbulence type="fractalNoise" baseFrequency={freq} numOctaves="4" seed="21" /><feColorMatrix values="0 0 0 0 .03  0 0 0 0 .06  0 0 0 0 .18  4 0 0 0 -1.900" /></filter>
      </defs>
      <rect width="259" height="68" fill={"url(#" + id + "g)"} />
      <g transform={hill ? "rotate(-20 130 34)" : "rotate(48 130 34)"}>
        <rect x="-60" y="-120" width="400" height="300" filter={"url(#" + id + "n)"} opacity=".45" />
        <rect x="-60" y="-120" width="400" height="300" filter={"url(#" + id + "d)"} opacity=".65" />
      </g>
      {hill && <path d="M0 0h44L30 26 10 68H0z" fill="#8f7390" opacity=".8" />}
    </svg>
  );
}

const vscode = (
  <g><path d="M2 6l33-6 8 41-33 6z" fill="#2c2c30" /><path d="M33 4l6 2 4 31-10 3-23-4 20 1z" fill="#2f9be0" /><path d="M7 18l4-2 13 12-2 3zM22 11l4 2-2 18-3-1L8 27l-1-2z" fill="#3aa0e0" /><path d="M21 15v12l-7-6z" fill="#2c2c30" /></g>
);

const dock = [
  [<g key="f"><path d="M2 4h42v39H2z" fill="#e9f1f8" /><path d="M2 4h22c-3 8-4 14-4 23h5c0 7 1 11 2 16H2z" fill="#12a9f2" /><path d="M13 15v4M33 15v4" stroke="#16243a" strokeWidth="2.200" strokeLinecap="round" /><path d="M10 29c7 8 19 8 26 0" fill="none" stroke="#16243a" strokeWidth="1.800" strokeLinecap="round" /></g>, true],
  [<g key="s"><circle cx="23" cy="23" r="22.500" fill="#e8eef3" /><circle cx="23" cy="23" r="20.500" fill="#1c95e0" /><circle cx="23" cy="23" r="18" fill="none" stroke="#c4e6fa" strokeWidth="2.500" strokeDasharray=".8 1.400" /><path d="M37 9L25.500 25.500l-5-5z" fill="#ee2f37" /><path d="M9 37l11.500-16.500 5 5z" fill="#f3f6f8" /></g>, false],
  [<g key="m"><path d="M2 8l34-6 6 37-34 7z" fill="#fff" stroke="#dfe5ea" strokeWidth="2" strokeDasharray="2 1.500" /><path d="M5 10l29-5 5 32-29 6z" fill="#69b3e8" /><path d="M8 12c6 2 11 6 13 11 4 2 9 4 12 8 1 3-2 4-5 3l-9 2-6-2 4-4c-5-4-9-10-9-18z" fill="#6a4b30" /><path d="M21 26l7 4-5 2z" fill="#e7ddcd" /><circle cx="36" cy="36" r="9" fill="none" stroke="#4b6e8c" opacity=".6" /></g>, true],
  [<g key="i"><circle cx="23" cy="23" r="22.500" fill="#e05ba6" /><path d="M3 34a22.500 22.500 0 0 0 38 2z" fill="#7a78ef" /><circle cx="23" cy="23" r="20" fill="#f7f5fa" /><path d="M17 33V14l16-4v19" fill="none" stroke="#ed4b78" strokeWidth="2.600" /><path d="M17 12l16-4v5l-16 4z" fill="#ed3f6b" /><ellipse cx="14" cy="33" rx="4.500" ry="3.800" fill="#7b68e8" /><ellipse cx="30" cy="29.500" rx="4.500" ry="3.800" fill="#4d9df0" /></g>, true],
  [<g key="g"><rect x="1" y="2" width="44" height="43" rx="2" fill="#a5adb3" /><circle cx="23" cy="23" r="19" fill="#2f3234" /><circle cx="23" cy="23" r="15.500" fill="none" stroke="#c9ccce" strokeWidth="3" strokeDasharray="1.600 1.200" /><circle cx="23" cy="23" r="12.500" fill="none" stroke="#bcbfc1" strokeWidth="3" /><path d="M23 23l13 0M23 23l-7-11M23 23l-7 11" stroke="#bcbfc1" strokeWidth="3" /><circle cx="23" cy="23" r="3.500" fill="#d5d7d8" /></g>, false],
  [<g key="c" transform="translate(-5.300 -5.300) scale(1.490)">{chromeLogo}</g>, true],
  [<g key="t"><rect x=".5" y="3" width="45" height="39" rx="2" fill="#9aa0a5" /><rect x="2" y="4.500" width="42" height="36" fill="#0d0d0e" /><rect x="4" y="7" width="38" height="31.500" fill="#242425" /><path d="M7 9.500l6 3-6 3M14 17.500h6" fill="none" stroke="#f3f3f3" strokeWidth="1.600" /></g>, true],
  [<g key="v">{vscode}</g>, true],
  [<g key="w"><path d="M23.500 3a19.500 19 0 1 1-7 37L5 44l2-11A19.500 19 0 0 1 23.500 3z" fill="#fff" /><path d="M23.500 5.500a17 16.500 0 1 1-7 31.500l-7.500 3.500 1.200-8A17 16.500 0 0 1 23.500 5.500z" fill="#2ee070" /><g fill="#fff"><circle cx="17" cy="22" r="2" /><circle cx="23.500" cy="22" r="2" /><circle cx="30" cy="22" r="2" /></g></g>, true],
  [<g key="x"><path d="M6 31h34l4 14q0 2-2 2H4q-2 0-2-2z" fill="#f58220" /><path d="M20.500 1q2.500-1.500 5 0L36 36c-3 5-23 5-26 0z" fill="#f58a26" /><path d="M18.300 8h9.400l2 7q-6.700 2.500-13.400 0zM13.500 24q9.500 3.500 19 0l2.500 9q-12 4-24 0z" fill="#eceef0" /></g>, true],
];

function Desktop() {
  return (
    <div className="flex h-[68px] shrink-0">
      <div className="w-[259px] bg-[#1a3c6e]"><Rocks id="l" from="#12305f" to="#2c61a3" freq=".022 .12" /></div>
      <div className="flex h-[68px] w-[762px] rounded-t-[4px] bg-[linear-gradient(90deg,#5b83cb,#4a80c9_15%,#5580c6_45%,#4a79c0_60%,#5a82c8_80%,#8186bd)] pl-[4px]">
        {dock.map(([art, run], i) => (
          <div key={i} className="relative flex w-[56px] shrink-0 flex-col items-center pt-[8px]">
            <svg className="h-[48px] w-[48px]" viewBox="-1 -1 48 48">{art}</svg>
            {run && <i className="mt-[6px] h-[4px] w-[4px] rounded-full bg-[#0a1450]" />}
            {i === 2 && <span className="absolute left-[19px] top-[6px] flex h-[20px] w-[38px] items-center justify-center rounded-full bg-[#f03e3f] font-['Inter',sans-serif] text-[11.500px] tracking-[-0.350px] text-white">13,755</span>}
          </div>
        ))}
        <div className="ml-[13px] mt-[9px] h-[50px] w-px bg-[#2f4f8c]" />
        <svg className="ml-[15px] mt-[16px] h-[42px] w-[50px]" viewBox="0 0 50 42">
          <rect y="2" width="49" height="27" fill="#242628" stroke="#4c6a8c" strokeWidth=".6" /><path d="M4 5h7M4 8h8M4 11h6M4 14h8" stroke="#2b4f60" /><path d="M18 6h16M20 9h22M20 12h14M18 15h20M22 18h16M18 21h12" stroke="#633e30" /><g transform="translate(33 24) scale(.37)">{vscode}</g>
        </svg>
        <svg className="ml-[7px] mt-[16px] h-[42px] w-[50px]" viewBox="0 0 50 42">
          <rect width="48" height="32" fill="#f2f1f3" /><rect x="17" y="5" width="31" height="27" fill="#e3dbd3" /><path d="M1 3h46M2 9h13" stroke="#b7c3cc" strokeDasharray="4 2" /><path d="M20 10h14M20 14h12M20 18h10M20 22h15" stroke="#fff" strokeWidth="2" />
          <g fill="#333"><circle cx="3" cy="13" r="1.200" fill="#c03" /><circle cx="3" cy="18" r="1.200" /><circle cx="3" cy="23" r="1.200" /><circle cx="3" cy="28" r="1.200" /></g><g transform="translate(30 22) scale(.52)">{chromeLogo}</g>
        </svg>
        <svg className="ml-[10px] mt-[7px] h-[50px] w-[40px]" viewBox="0 0 40 50">
          <path d="M2 7h36l-5 38q-13 5-26 0z" fill="#dfe2e5" /><path d="M10 12l2 33M30 12l-2 33M18 13l1 33M24 20l-3 24" stroke="#cdd1d5" /><ellipse cx="20" cy="7" rx="18" ry="4" fill="#50585f" /><path d="M5 8l5-6 6 3 4-4 5 4 6-3 4 6-9 2-5-3-6 3z" fill="#dfe3e6" /><path d="M14 5l3-2 2 4zM26 8l4-5 2 5z" fill="#27333b" /><path d="M22 6l3-3 2 4z" fill="#c4402f" /><path d="M9 7l4-2 3 4z" fill="#27333b" /><path d="M2 7c0 5 36 5 36 0" fill="none" stroke="#f5f6f7" strokeWidth="1.600" />
        </svg>
      </div>
      <div className="grid w-[259px] bg-[#1c2a50]">
        <div className="col-start-1 row-start-1"><Rocks id="r" from="#2c3260" to="#16305c" freq=".05 .11" hill /></div>
        <div className="z-10 col-start-1 row-start-1 pr-[3px] text-right font-['Inter',sans-serif] text-[12px] leading-[12px] font-bold tracking-[-0.050px] text-[#d5d2da] [text-shadow:0_1px_2px_#000]">06 CON...TION.pdf</div>
      </div>
    </div>
  );
}

export default function App() {
  return (
    <div className="flex h-[800px] w-[1280px] flex-col overflow-hidden bg-[#12284f]">
      <MenuBar />
      <TitleBar />
      <Video />
      <Controls />
      <Desktop />
    </div>
  );
}
